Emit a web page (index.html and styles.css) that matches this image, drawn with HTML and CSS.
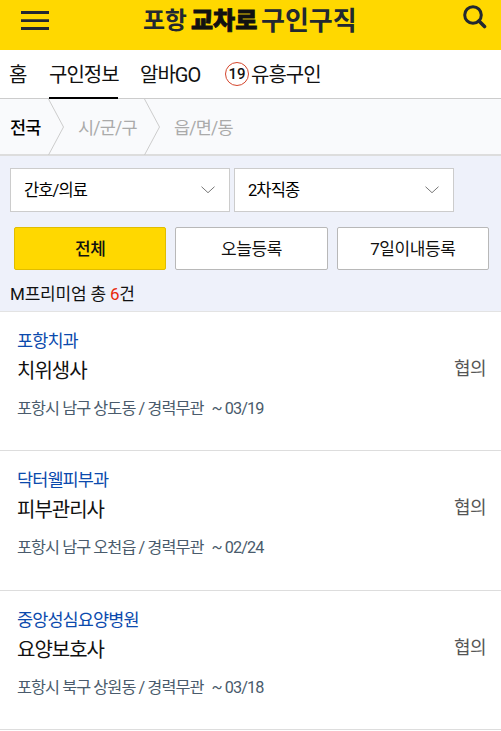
FILE: index.html
```html
<!DOCTYPE html>
<html lang="ko">
<head>
    <meta charset="UTF-8">
    <meta name="viewport" content="width=device-width, initial-scale=1.0">
    <title>포항 교차로 구인구직</title>
    <link rel="stylesheet" href="styles.css">
</head>
<body>
    <header class="header">
        <svg class="menu-icon" width="28" height="20" viewBox="0 0 28 20">
            <path d="M0 1.5h28M0 9.7h28M0 17.5h28" stroke="#222831" stroke-width="2.8"/>
        </svg>
        <h1 class="logo">
            <span class="logo-city">포항</span>
            <span class="logo-brand">교차로</span>
            <span class="logo-job">구인구직</span>
        </h1>
        <svg class="search-icon" width="24" height="24" viewBox="0 0 24 24">
            <circle cx="10" cy="10" r="8.3" fill="none" stroke="#222831" stroke-width="3"/>
            <path d="M16 16l5.5 5.5" stroke="#222831" stroke-width="3.6" stroke-linecap="round"/>
        </svg>
    </header>

    <nav class="nav">
        <a class="nav-item nav-home">홈</a>
        <a class="nav-item nav-jobs active">구인정보</a>
        <a class="nav-item nav-alba">알바GO</a>
        <a class="nav-item nav-adult"><span class="age">19</span>유흥구인</a>
    </nav>

    <div class="location">
        <span class="loc loc-all">전국</span>
        <svg class="arrow" width="16" height="56" viewBox="0 0 16 56"><path d="M.5 0l15 28-15 28"/></svg>
        <span class="loc loc-city">시/군/구</span>
        <svg class="arrow" width="16" height="56" viewBox="0 0 16 56"><path d="M.5 0l15 28-15 28"/></svg>
        <span class="loc loc-town">읍/면/동</span>
    </div>

    <section class="filter">
        <div class="selects">
            <div class="select">
                <span>간호/의료</span>
                <svg width="14" height="8" viewBox="0 0 14 8"><path d="M.5 .7l6.5 6 6.5-6"/></svg>
            </div>
            <div class="select">
                <span>2차직종</span>
                <svg width="14" height="8" viewBox="0 0 14 8"><path d="M.5 .7l6.5 6 6.5-6"/></svg>
            </div>
        </div>
        <div class="buttons">
            <div class="btn on">전체</div>
            <div class="btn">오늘등록</div>
            <div class="btn">7일이내등록</div>
        </div>
        <p class="total">M프리미엄 총 <em>6</em>건</p>
    </section>

    <ul class="list">
        <li class="item">
            <div>
                <p class="company">포항치과</p>
                <p class="title">치위생사</p>
                <p class="info">포항시 남구 상도동 / 경력무관 <span class="date">~ 03/19</span></p>
            </div>
            <span class="pay">협의</span>
        </li>
        <li class="item">
            <div>
                <p class="company">닥터웰피부과</p>
                <p class="title">피부관리사</p>
                <p class="info">포항시 남구 오천읍 / 경력무관 <span class="date">~ 02/24</span></p>
            </div>
            <span class="pay">협의</span>
        </li>
        <li class="item">
            <div>
                <p class="company">중앙성심요양병원</p>
                <p class="title">요양보호사</p>
                <p class="info">포항시 북구 상원동 / 경력무관 <span class="date">~ 03/18</span></p>
            </div>
            <span class="pay">협의</span>
        </li>
    </ul>
</body>
</html>
```
FILE: styles.css
```css
* {
    box-sizing: border-box;
}

body {
    margin: 0;
    font-family: Roboto, "Noto Sans CJK KR", sans-serif;
    background-color: #fff;
    color: #111;
    overflow: hidden;
}

p, h1, ul {
    margin: 0;
    padding: 0;
}

/* header */
.header {
    display: flex;
    align-items: flex-start;
    height: 50px;
    padding: 0 14px 0 21px;
    background-color: #ffd800;
}

.menu-icon {
    margin-top: 11px;
}

.logo {
    display: flex;
    margin-left: 94px;
    font-size: 24px;
    line-height: 42px;
    color: #222831;
}

.logo-city {
    width: 48px;
    font-weight: 700;
    letter-spacing: -0.4px;
}

.logo-brand {
    width: 70px;
    font-weight: 900;
    color: #111;
    -webkit-text-stroke: 0.8px #111;
}

.logo-job {
    font-size: 26px;
    font-weight: 700;
}

.search-icon {
    margin: 5px 0 0 auto;
}

/* top menu */
.nav {
    display: flex;
    height: 49px;
    padding-left: 9px;
    border-bottom: 1px solid #ccc;
}

.nav-item {
    display: flex;
    align-items: center;
    height: 49px;
    padding-bottom: 2px;
    font-size: 20px;
    letter-spacing: -1px;
    white-space: nowrap;
}

.nav-home {
    width: 40px;
}

.nav-jobs {
    width: 69px;
    margin-right: 22px;
}

.nav-alba {
    width: 85px;
}

.nav-item.active {
    padding-bottom: 0;
    border-bottom: 2px solid #000;
}

.age {
    width: 24px;
    height: 24px;
    margin-right: 2px;
    border: 1px solid #d4452c;
    border-radius: 50%;
    font-size: 15px;
    font-weight: 500;
    letter-spacing: 0;
    line-height: 22px;
    text-align: center;
}

/* location steps */
.location {
    display: flex;
    align-items: center;
    height: 57px;
    padding-left: 10px;
    background-color: #f9fafc;
    border-bottom: 2px solid #ddd;
    font-size: 17.5px;
    letter-spacing: -0.8px;
}

.loc {
    color: #aaa;
}

.loc-all {
    width: 38px;
    font-weight: 500;
    color: #000;
}

.loc-city {
    width: 80px;
    padding-left: 14px;
}

.loc-town {
    padding-left: 14px;
}

.arrow path {
    fill: none;
    stroke: #ccc;
}

/* filter */
.filter {
    height: 156px;
    padding: 12px 10px 0;
    background-color: #eef1fa;
    border-bottom: 1px solid #e3e3e3;
}

.selects {
    display: flex;
    gap: 4px;
}

.select {
    display: flex;
    align-items: center;
    justify-content: space-between;
    width: 220px;
    height: 44px;
    padding: 0 14px 0 13px;
    background-color: #fff;
    border: 1px solid #ccc;
    font-size: 16.5px;
    letter-spacing: -0.9px;
    color: #000;
}

.select span {
    margin-top: -2px;
}

.select path {
    fill: none;
    stroke: #777;
}

.buttons {
    display: flex;
    gap: 9px;
    padding: 15px 2px 0 4px;
}

.btn {
    flex: 1;
    height: 43px;
    background-color: #fff;
    border: 1px solid #b8b8b8;
    border-radius: 2px;
    font-size: 17px;
    line-height: 42px;
    letter-spacing: -0.4px;
    text-align: center;
}

.on {
    background-color: #ffd800;
    border-color: #e0bd00;
    font-weight: 500;
}

.total {
    margin-top: 12px;
    font-size: 17px;
    line-height: 24px;
    letter-spacing: -0.2px;
}

.total em {
    font-style: normal;
    color: #e8290b;
}

/* job list */
.list {
    list-style: none;
}

.item {
    display: flex;
    justify-content: space-between;
    height: 139.3px;
    padding: 16px 15px 0 17px;
    border-bottom: 1px solid #ddd;
}

.company {
    font-size: 17.5px;
    line-height: 26px;
    letter-spacing: -0.9px;
    color: #0b4aad;
}

.title {
    margin-top: 1px;
    font-size: 20px;
    line-height: 32px;
    letter-spacing: -1px;
}

.info {
    margin-top: 10px;
    font-size: 16.3px;
    line-height: 24px;
    letter-spacing: -0.95px;
    color: #4a5b6c;
}

.date {
    margin-left: 5px;
}

.pay {
    padding-top: 28px;
    font-size: 18px;
    line-height: 26px;
    letter-spacing: -0.5px;
    color: #555;
}
```
